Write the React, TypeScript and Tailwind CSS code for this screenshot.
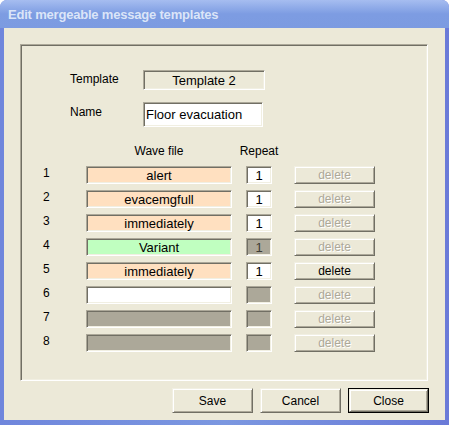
const font = { fontFamily: '"Liberation Sans", Arial, sans-serif' };

const sunken =
  'border border-t-[#aca899] border-l-[#aca899] border-b-white border-r-white shadow-[inset_1px_1px_0_#716f64,inset_-1px_-1px_0_#f1efe2]';
const raised =
  'border border-t-[#f1efe2] border-l-[#f1efe2] border-b-[#716f64] border-r-[#716f64] shadow-[inset_1px_1px_0_#ffffff,inset_-1px_-1px_0_#aca899] bg-[#ece9d8]';

type Row = { wave?: string; fill: string; repeat?: string; repeatFill: string; enabled?: boolean };

const rows: Row[] = [
  { wave: 'alert', fill: 'bg-[#ffe0c0]', repeat: '1', repeatFill: 'bg-white' },
  { wave: 'evacemgfull', fill: 'bg-[#ffe0c0]', repeat: '1', repeatFill: 'bg-white' },
  { wave: 'immediately', fill: 'bg-[#ffe0c0]', repeat: '1', repeatFill: 'bg-white' },
  { wave: 'Variant', fill: 'bg-[#c0ffc0]', repeat: '1', repeatFill: 'bg-[#aca899]' },
  { wave: 'immediately', fill: 'bg-[#ffe0c0]', repeat: '1', repeatFill: 'bg-white', enabled: true },
  { fill: 'bg-white', repeatFill: 'bg-[#aca899]' },
  { fill: 'bg-[#aca899]', repeatFill: 'bg-[#aca899]' },
  { fill: 'bg-[#aca899]', repeatFill: 'bg-[#aca899]' },
];

function DeleteButton({ enabled }: { enabled?: boolean }) {
  return (
    <div className={`${raised} w-[81px] h-[18px] flex items-center justify-center`}>
      {enabled ? (
        <span className="text-black">delete</span>
      ) : (
        <span className="text-[#aca899] [text-shadow:1px_1px_0_#ffffff]">delete</span>
      )}
    </div>
  );
}

export default function App() {
  return (
    <div className="w-[449px] h-[425px] bg-white text-[12px] leading-none text-black" style={font}>
      <div className="w-full h-full rounded-t-[7px] overflow-hidden flex flex-col bg-gradient-to-r from-[#6f86dc] via-[#7b97e0] to-[#6a7ad8]">
        <div className="h-[28px] shrink-0 flex items-center pl-[8px] bg-gradient-to-b from-[#a6bdf0] via-[#7d9ce2] to-[#7c9be1]">
          <span className="text-[13px] font-bold text-[#dbe5f8] tracking-[-0.2px]">
            Edit mergeable message templates
          </span>
        </div>
        <div className="flex-1 mx-[4px] mb-[5px] bg-[#ece9d8] flex flex-col">
          <div className={`${sunken} ml-[16px] mt-[16px] w-[408px] h-[337px] flex flex-col`}>
            <div className="flex mt-[25px] pl-[49px]">
              <div className="w-[73px] pt-[3px]">Template</div>
              <div className={`${sunken} w-[122px] h-[20px] flex items-center justify-center text-[13px]`}>
                Template 2
              </div>
            </div>
            <div className="flex mt-[12px] pl-[49px]">
              <div className="w-[73px] pt-[4px]">Name</div>
              <div className={`${sunken} w-[120px] h-[25px] flex items-center pl-[2px] bg-white text-[13px]`}>
                Floor evacuation
              </div>
            </div>
            <div className="flex mt-[17px] pl-[65px] h-[13px] items-center">
              <div className="w-[146px] text-center">Wave file</div>
              <div className="ml-[14px] w-[26px] flex justify-center">Repeat</div>
            </div>
            <div className="flex flex-col gap-[6px] mt-[9px]">
              {rows.map((r, i) => (
                <div key={i} className="flex h-[18px]">
                  <div className="w-[65px] pl-[22px] pt-[1px]">{i + 1}</div>
                  <div className={`${sunken} ${r.fill} w-[146px] h-[18px] flex items-center justify-center text-[13px]`}>
                    {r.wave}
                  </div>
                  <div
                    className={`${sunken} ${r.repeatFill} ml-[14px] w-[26px] h-[18px] flex items-center justify-center text-[13px] ${
                      r.repeatFill === 'bg-white' ? 'text-black' : 'text-[#3c3c34]'
                    }`}
                  >
                    {r.repeat}
                  </div>
                  <div className="ml-[22px]">
                    <DeleteButton enabled={r.enabled} />
                  </div>
                </div>
              ))}
            </div>
          </div>
          <div className="flex justify-end gap-[7px] mt-[7px] pr-[16px]">
            <div className={`${raised} w-[81px] h-[25px] flex items-center justify-center`}>Save</div>
            <div className={`${raised} w-[81px] h-[25px] flex items-center justify-center`}>Cancel</div>
            <div className="border border-black w-[81px] h-[25px]">
              <div className={`${raised} w-full h-full flex items-center justify-center`}>Close</div>
            </div>
          </div>
        </div>
      </div>
    </div>
  );
}
